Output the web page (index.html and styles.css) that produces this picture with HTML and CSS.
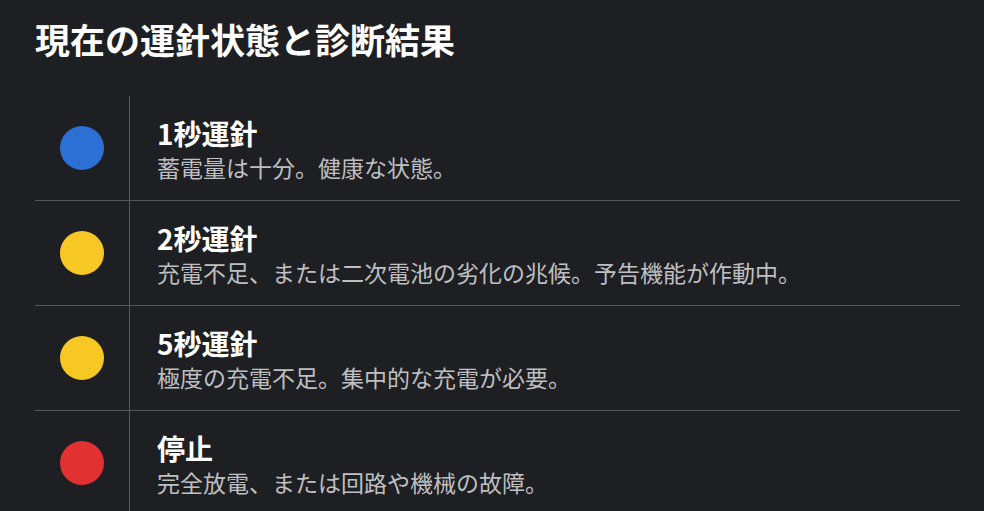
FILE: index.html
```html
<!DOCTYPE html>
<html lang="ja">
<head>
<meta charset="utf-8">
<title>現在の運針状態と診断結果</title>
<link rel="stylesheet" href="styles.css">
</head>
<body>
<main class="page">
  <h1 class="title">現在の運針状態と診断結果</h1>
  <div class="list">
    <div class="row">
      <div class="indicator"><span class="dot dot-blue"></span></div>
      <div class="info">
        <div class="name">1秒運針</div>
        <div class="desc">蓄電量は十分。健康な状態。</div>
      </div>
    </div>
    <div class="row">
      <div class="indicator"><span class="dot dot-yellow"></span></div>
      <div class="info">
        <div class="name">2秒運針</div>
        <div class="desc">充電不足、または二次電池の劣化の兆候。予告機能が作動中。</div>
      </div>
    </div>
    <div class="row">
      <div class="indicator"><span class="dot dot-yellow"></span></div>
      <div class="info">
        <div class="name">5秒運針</div>
        <div class="desc">極度の充電不足。集中的な充電が必要。</div>
      </div>
    </div>
    <div class="row">
      <div class="indicator"><span class="dot dot-red"></span></div>
      <div class="info">
        <div class="name">停止</div>
        <div class="desc">完全放電、または回路や機械の故障。</div>
      </div>
    </div>
  </div>
</main>
</body>
</html>
```

FILE: styles.css
```css
html, body {
  margin: 0;
  padding: 0;
  background: #1e1f22;
  height: 100%;
  overflow: hidden;
}

body {
  font-family: "Noto Sans CJK JP", "Noto Sans", sans-serif;
  color: #ffffff;
}

.page {
  padding: 18px 24px 0 35px;
}

.title {
  margin: 0;
  font-size: 35px;
  line-height: 42px;
  font-weight: 700;
  color: #ffffff;
  letter-spacing: 0;
}

.list {
  margin-top: 36px;
  width: 925px;
}

.row {
  display: grid;
  grid-template-columns: 95px 1fr;
  height: 104px;
  border-bottom: 1px solid #56575a;
}

.indicator {
  display: flex;
  align-items: center;
  justify-content: center;
  border-right: 1px solid #56575a;
}

.dot {
  width: 44px;
  height: 44px;
  border-radius: 50%;
  display: block;
}

.dot-blue { background: #2c6fd5; }
.dot-yellow { background: #f7c824; }
.dot-red { background: #e23131; }

.info {
  display: flex;
  flex-direction: column;
  justify-content: center;
  padding: 3px 0 0 27px;
}

.name {
  font-size: 28px;
  line-height: 35px;
  font-weight: 700;
  color: #ffffff;
}

.desc {
  font-size: 23px;
  line-height: 33px;
  color: #bfbfc1;
}
```
